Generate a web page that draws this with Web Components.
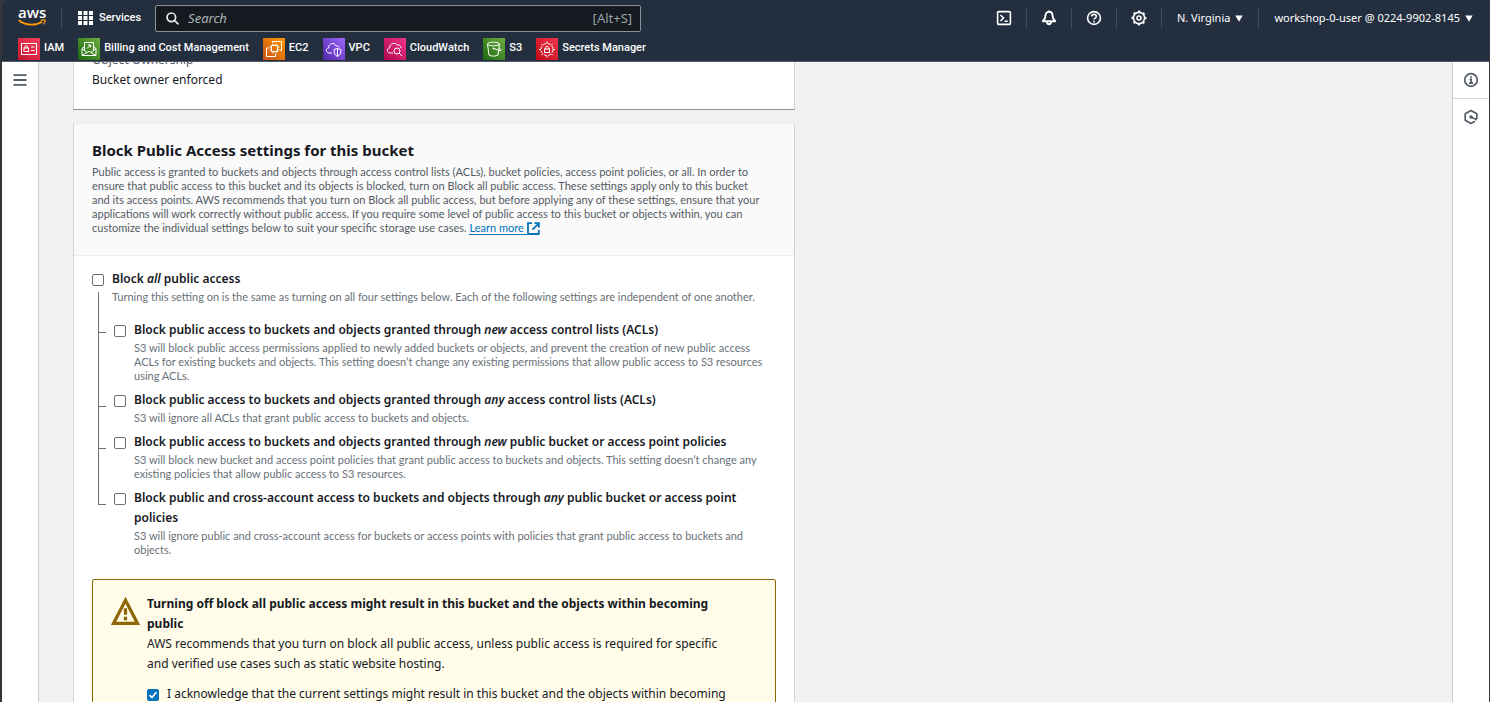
<!DOCTYPE html>
<html lang="en">
<head>
<meta charset="utf-8">
<meta name="viewport" content="width=device-width, initial-scale=1">
<title>S3 - Create bucket</title>
<style>
  body {
    margin: 0;
    font-family: "Noto Sans", "Open Sans", sans-serif;
    font-size: 12px;
    line-height: 20px;
    color: #16191f;
    background: #33373c;
    overflow: hidden;
    --font-nav: Roboto, "Liberation Sans", sans-serif;
    --font-small: Lato, "Liberation Sans", sans-serif;
  }
  em { font-style: italic; }
</style>
</head>
<body>
<console-app></console-app>

<template id="console-app">
  <style>
    :host { display: flex; flex-direction: column; height: 100vh; padding: 0 1px 0 2px; box-sizing: border-box; }
    .frame { flex: 1; min-height: 0; display: flex; background: #f2f2f2; }
    nav, aside { flex: none; background: #fff; }
    nav { width: 36px; border-right: 1px solid #c8cccc; }
    aside { width: 36px; border-left: 1px solid #c8cccc; }
    button { all: unset; display: grid; place-items: center; width: 100%; height: 36px; color: #545b64; }
    aside button { border-bottom: 1px solid #d5dbdb; }
    aside button:last-child { border-bottom: 0; }
    main { flex: 1; min-width: 0; overflow: hidden; padding-left: 34px; }
    .scrolled { display: grid; gap: 13px; max-width: 722px; margin-top: -32px; }
    h2, p, ul { margin: 0; padding: 0; }
    .k { color: #545b64; }
    h2 { font-size: 15px; line-height: 20px; font-weight: 700; }
    .desc { font-family: var(--font-small); font-size: 11px; line-height: 14px; color: #545b64; margin-top: 5px; }
    a { color: #0073bb; text-decoration: none; border-bottom: 1px solid #0073bb; }
    .desc svg { vertical-align: -3px; color: #0073bb; }
    setting-list { margin-bottom: 22px; }
  </style>
  <top-nav></top-nav>
  <div class="frame">
    <nav aria-label="Service">
      <button type="button" aria-label="Open navigation"><svg width="14" height="12" viewBox="0 0 14 12" stroke="currentColor" stroke-width="1.8"><path d="M.5 1.2h13M.5 6h13M.5 10.800h13"/></svg></button>
    </nav>
    <main>
      <div class="scrolled">
        <section-card>
          <div class="k">Object Ownership</div>
          <div>Bucket owner enforced</div>
        </section-card>
        <section-card>
          <h2 slot="header">Block Public Access settings for this bucket</h2>
          <p slot="header" class="desc">Public access is granted to buckets and objects through access control lists (ACLs), bucket policies, access point policies, or all. In order to<br>ensure that public access to this bucket and its objects is blocked, turn on Block all public access. These settings apply only to this bucket<br>and its access points. AWS recommends that you turn on Block all public access, but before applying any of these settings, ensure that your<br>applications will work correctly without public access. If you require some level of public access to this bucket or objects within, you can<br>customize the individual settings below to suit your specific storage use cases. <a href="#learn">Learn more </a> <svg width="13" height="13" viewBox="0 0 13 13" fill="none" stroke="currentColor" stroke-width="1.8"><path d="M5 1.200H1v10.800h10.800V8M7.500 1.200h4.400v4.400M11.800 1.300L5.500 7.600"/></svg></p>
          <setting-list>
            <setting-option kind="root">Block <em>all</em> public access
              <span slot="desc">Turning this setting on is the same as turning on all four settings below. Each of the following settings are independent of one another.</span></setting-option>
            <setting-option kind="first">Block public access to buckets and objects granted through <em>new</em> access control lists (ACLs)
              <span slot="desc">S3 will block public access permissions applied to newly added buckets or objects, and prevent the creation of new public access<br>ACLs for existing buckets and objects. This setting doesn’t change any existing permissions that allow public access to S3 resources<br>using ACLs.</span></setting-option>
            <setting-option>Block public access to buckets and objects granted through <em>any</em> access control lists (ACLs)
              <span slot="desc">S3 will ignore all ACLs that grant public access to buckets and objects.</span></setting-option>
            <setting-option>Block public access to buckets and objects granted through <em>new</em> public bucket or access point policies
              <span slot="desc">S3 will block new bucket and access point policies that grant public access to buckets and objects. This setting doesn’t change any<br>existing policies that allow public access to S3 resources.</span></setting-option>
            <setting-option kind="last">Block public and cross-account access to buckets and objects through <em>any</em> public bucket or access point<br>policies
              <span slot="desc">S3 will ignore public and cross-account access for buckets or access points with policies that grant public access to buckets and<br>objects.</span></setting-option>
          </setting-list>
          <warning-alert>
            <span slot="title">Turning off block all public access might result in this bucket and the objects within becoming<br>public</span>
            AWS recommends that you turn on block all public access, unless public access is required for specific<br>and verified use cases such as static website hosting.
            <span slot="ack">I acknowledge that the current settings might result in this bucket and the objects within becoming</span>
          </warning-alert>
        </section-card>
      </div>
    </main>
    <aside aria-label="Tools">
      <button type="button" aria-label="Info"><svg width="16" height="16" viewBox="0 0 16 16" fill="none" stroke="currentColor" stroke-width="1.700"><circle cx="8" cy="8" r="6.300"/><path d="M6.500 7.300H8.200V11M6 11.200h4.300M7.300 4.800h1.600"/></svg></button>
      <button type="button" aria-label="Tutorials"><svg width="16" height="16" viewBox="0 0 16 16" fill="none" stroke="currentColor" stroke-width="1.700" stroke-linejoin="round"><path d="M13.800 10V4.800L8 1.600 2.200 4.800v6.400L8 14.400l4-2.200"/><circle cx="8" cy="8" r="1.800" fill="currentColor" stroke="none"/><path d="M8 8l5.800 2.800"/></svg></button>
    </aside>
  </div>
</template>

<template id="top-nav">
  <style>
    :host { display: block; flex: none; background: #232f3e; color: #fff; height: 61px; border-bottom: 1px solid #545b64; border-top-left-radius: 8px; }
    .row { display: flex; align-items: center; }
    .bar { height: 36px; }
    button, input, a { all: unset; box-sizing: border-box; }
    .logo { flex: none; display: grid; width: 28px; height: 22px; margin-left: 16px; align-content: start; justify-items: center; }
    .logo span { font: 600 15px/11px "Open Sans", sans-serif; height: 12px; }
    .sep { flex: none; width: 1px; height: 20px; background: #414d5c; }
    .logo + .sep { margin-left: 15px; }
    .services { display: flex; align-items: center; gap: 6px; font: 500 11px/20px var(--font-nav); margin: 0 14px 0 16px; }
    .search { display: flex; align-items: center; box-sizing: border-box; flex: 0 1 486px; height: 27px; padding: 0 8px 0 10px; border: 1px solid #879596; border-radius: 2px; background: #16191f; }
    .search input { flex: 1; min-width: 0; margin-left: 9px; font-size: 13px; line-height: 20px; color: #fff; }
    .search input::placeholder { color: #aab7b8; font-style: italic; opacity: 1; }
    .search span { font-size: 13px; color: #95a5a6; }
    .tools { margin-left: auto; display: flex; align-items: center; padding-right: 1px; }
    .ic { display: grid; place-items: center; width: 44px; height: 30px; }
    .menu { display: flex; align-items: center; gap: 5px; font-size: 11px; line-height: 20px; padding: 0 15px; }
    .favs { gap: 14px; padding-left: 16px; height: 25px; align-items: start; }
    favorite-link { margin-top: 2px; }
  </style>
  <div class="row bar">
    <a class="logo" href="#home" aria-label="AWS home"><span>aws</span><svg width="28" height="8" viewBox="0 0 28 8" fill="none" stroke="#f90"><path d="M.8 1.200C7.500 6.800 18 7 24 2.800" stroke-width="1.800"/><path d="M22.800 1.300c2-.700 4.400-.6 4.400 0s-.4 2.500-1.600 4" stroke-width="1.300"/></svg></a>
    <span class="sep"></span>
    <button type="button" class="services"><svg width="15" height="14" viewBox="0 0 15 14" fill="#fff"><path d="M0 0h4v4H0zM5.500 0h4v4h-4zM11 0h4v4h-4zM0 5h4v4H0zM5.500 5h4v4h-4zM11 5h4v4h-4zM0 10h4v4H0zM5.500 10h4v4h-4zM11 10h4v4h-4z"/></svg>Services</button>
    <div class="search"><svg width="13" height="13" viewBox="0 0 13 13" fill="none" stroke="#eaeded" stroke-width="1.700"><circle cx="5.300" cy="5.300" r="4.300"/><path d="M8.400 8.400l4 4"/></svg><input type="search" aria-label="Search" placeholder="Search"><span>[Alt+S]</span></div>
    <div class="tools">
      <button type="button" class="ic" aria-label="CloudShell"><svg width="16" height="16" viewBox="0 0 16 16" fill="none" stroke="#fff" stroke-width="1.600"><rect x="1.600" y="1.600" width="12.800" height="12.800" rx="1"/><path d="M4.500 5l3 3-3 3M8.500 11.300h3.300"/></svg></button><span class="sep"></span>
      <button type="button" class="ic" aria-label="Notifications"><svg width="16" height="16" viewBox="0 0 16 16" fill="none" stroke="#fff" stroke-width="1.900" stroke-linejoin="round"><path d="M8 1.800C5.500 1.800 4.500 3.700 4.500 5.500c0 3-1 4-2.700 5.700h12.400C12.500 9.500 11.500 8.500 11.500 5.500 11.500 3.700 10.500 1.800 8 1.800zM8 .5v1.300"/><path d="M6 11.500c0 3.600 4 3.600 4 0"/></svg></button><span class="sep"></span>
      <button type="button" class="ic" aria-label="Help"><svg width="16" height="16" viewBox="0 0 16 16" fill="none" stroke="#fff" stroke-width="1.600"><circle cx="8" cy="8" r="6.400"/><path d="M5.700 6.600c0-3 4.600-2.800 4.600-.2 0 1.700-2.300 1.600-2.300 3.200M8 10.700v1.700"/></svg></button><span class="sep"></span>
      <button type="button" class="ic" aria-label="Settings"><svg width="16" height="16" viewBox="0 0 16 16" fill="none" stroke="#fff"><circle cx="8" cy="8" r="5.600" stroke-width="1.600"/><circle cx="8" cy="8" r="6.700" stroke-width="1.500" stroke-dasharray="2.400 2.862" stroke-dashoffset="1.200"/><circle cx="8" cy="8" r="2" stroke-width="1.600"/></svg></button><span class="sep"></span>
      <button type="button" class="menu">N. Virginia <svg width="8" height="7" viewBox="0 0 8 7" fill="#fff"><path d="M.3.500h7.400L4 6.700z"/></svg></button><span class="sep"></span>
      <button type="button" class="menu">workshop-0-user @ 0224-9902-8145 <svg width="8" height="7" viewBox="0 0 8 7" fill="#fff"><path d="M.3.500h7.400L4 6.700z"/></svg></button>
    </div>
  </div>
  <div class="row favs">
    <favorite-link tone="red" icon="iam">IAM</favorite-link>
    <favorite-link tone="green" icon="billing">Billing and Cost Management</favorite-link>
    <favorite-link tone="orange" icon="ec2">EC2</favorite-link>
    <favorite-link tone="purple" icon="vpc">VPC</favorite-link>
    <favorite-link tone="pink" icon="cloudwatch">CloudWatch</favorite-link>
    <favorite-link tone="green" icon="s3">S3</favorite-link>
    <favorite-link tone="red" icon="secrets">Secrets Manager</favorite-link>
  </div>
</template>

<template id="favorite-link">
  <style>
    :host { display: block; }
    a { display: flex; gap: 4px; color: #fff; text-decoration: none; font: 500 11px/20px var(--font-nav); }
    i { flex: none; width: 22px; height: 22px; background: linear-gradient(45deg, var(--a), var(--b)); }
    svg { display: block; }
    :host([tone=red]) { --a: #bd0816; --b: #f4364c; }
    :host([icon=iam]) { --a: #c5162e; --b: #f43e5c; }
    :host([tone=green]) { --a: #1b660f; --b: #6cae3e; }
    :host([tone=orange]) { --a: #c8511b; --b: #f90; }
    :host([tone=purple]) { --a: #4d27a8; --b: #a166ff; }
    :host([tone=pink]) { --a: #b0084d; --b: #f0338a; }
  </style>
  <a href="#service"><i></i><slot></slot></a>
</template>

<template id="section-card">
  <style>
    :host { display: block; background: #fff; border: 1px solid #d0d4d4; border-top-color: #eaeded; border-bottom-color: #879596; box-sizing: border-box; }
    .head { background: #fafafa; border-bottom: 1px solid #eaeded; padding: 16px 18px 20px; }
    .head[hidden] { display: none; }
    .body { padding: 13px 18px 19px; }
    .head[hidden] + .body { padding-top: 19px; }
  </style>
  <div class="head"><slot name="header"></slot></div>
  <div class="body"><slot></slot></div>
</template>

<template id="setting-list">
  <style>:host { display: grid; }</style>
  <slot></slot>
</template>

<template id="check-box-style">
  <style>
    input { appearance: none; flex: none; box-sizing: border-box; width: 12px; height: 12px; margin: 0; border: 1px solid #687078; border-radius: 2px; background: #fff; }
    input:checked { border-color: #0073bb; background: #0073bb url("data:image/svg+xml,%3Csvg xmlns='http://www.w3.org/2000/svg' viewBox='0 0 10 10'%3E%3Cpath d='M1.500 5.200 4 7.600 8.500 2' fill='none' stroke='white' stroke-width='1.700'/%3E%3C/svg%3E"); }
  </style>
</template>

<template id="setting-option">
  <style>
    :host { display: flex; --line: #687078; }
    .rail { flex: none; display: flex; flex-direction: column; width: 8px; margin: 0 8px 0 6px; }
    .tick { height: 16px; border: solid var(--line); border-width: 0 0 1px 1px; }
    :host([kind=first]) .tick { height: 12px; }
    .down { flex: 1; border-left: 1px solid var(--line); }
    :host([kind=last]) .down { border: 0; }
    .box { flex: none; display: flex; flex-direction: column; width: 20px; padding-top: 5px; }
    .box .down { display: none; margin: 6px 0 0 6px; }
    .text { padding-bottom: 7px; }
    label { display: block; font-weight: 600; }
    .desc { font: 11px/14px var(--font-small); color: #687078; margin-top: 1px; }
    :host([kind=root]) .rail { display: none; }
    :host([kind=root]) .box .down { display: block; }
    :host([kind=root]) .text { padding-bottom: 16px; }
    :host([kind=last]) .text { padding-bottom: 0; }
  </style>
  <div class="rail"><div class="tick"></div><div class="down"></div></div>
  <div class="box"><input type="checkbox" id="opt"><div class="down"></div></div>
  <div class="text"><label for="opt"><slot></slot></label><div class="desc"><slot name="desc"></slot></div></div>
</template>

<template id="warning-alert">
  <style>
    :host { display: flex; gap: 7px; background: #fffce9; border: 1px solid #8d6605; border-radius: 2px; padding: 14px 18px; }
    .icon { flex: none; margin-top: 3px; }
    strong { display: block; }
    .ack { display: flex; gap: 8px; margin-top: 10px; }
    .ack input { margin-top: 5px; }
  </style>
  <svg class="icon" width="29" height="28" viewBox="0 0 29 28" fill="none" stroke="#8d6605"><path d="M14.500 3.200L2.600 26.300h23.800z" stroke-width="3.200"/><path d="M14.500 11.200v6.600M14.500 19.800v3.400" stroke-width="3.200"/></svg>
  <div><strong><slot name="title"></slot></strong><slot></slot>
  <div class="ack"><input type="checkbox" id="ack" checked><label for="ack"><slot name="ack"></slot></label></div></div>
</template>

<script>
  const part = id => document.getElementById(id).content.cloneNode(true);

  const glyphs = {
    iam: '<rect x="3.500" y="5.500" width="15" height="11"/><rect x="6" y="10" width="4.500" height="3.500"/><path d="M7 10V8.800c0-1.500 2.500-1.500 2.500 0V10M13 9h3.500M13 12.500h3.500"/>',
    billing: '<path d="M4 10.500v7h14v-7l-2.500-2M4 10.500l2.500-2M4 10.500l5 4 2-1.200 2 1.200 5-4M4 17.500l5-3M18 17.500l-5-3M6.500 12V4.500h9V12M9 10.500l3.500-3.500M10 7h2.500v2.500"/>',
    ec2: '<rect x="8.500" y="7.500" width="6" height="6"/><path d="M10 7.500V5.500M13 7.500V5.500M10 15.500v-2M13 15.500v-2M6.500 9h2M6.500 12h2M14.500 9h2M14.500 12h2M9.500 5V3.500h9v9H17M6 10H3.500v8.500h9V16"/>',
    vpc: '<path d="M9 15H6c-3.500 0-3.500-5-.300-5C5.500 5 11.500 4 13 8c2-.5 3 .5 3 1.500"/><path d="M11 11.500l3.500-1 3.500 1c0 3.500-.5 5.500-3.500 7-3-1.500-3.500-3.500-3.500-7zM14.500 10.500v8"/>',
    cloudwatch: '<path d="M9 15H6c-3.500 0-3.500-5-.300-5C5.500 5 11.500 4 13 7c2-.5 4 .5 4 3"/><circle cx="13" cy="13" r="3"/><path d="M15.200 15.200l3 3"/>',
    s3: '<ellipse cx="10.500" cy="6" rx="6" ry="1.800"/><path d="M4.500 6l1.500 11c2 1.500 7 1.500 9 0l1.500-11M10.500 10.500l6.500 2c2 .3 1.500-1-.800-2"/><circle cx="10.500" cy="10.500" r=".6"/>',
    secrets: '<circle cx="11" cy="11.500" r="6" stroke-dasharray="3.200 1.500"/><path d="M11 3.500v2M11 17.500v2M3 11.500h2M17 11.500h2M5.300 5.800l1.400 1.400M15.300 15.800l1.400 1.400M5.300 17.200l1.400-1.400M15.300 7.200l1.400-1.400M9.500 11V9.500c0-1.500 3-1.500 3 0V11"/><rect x="8.500" y="11" width="5" height="3.500"/>'
  };

  function define(name, setup) {
    customElements.define(name, class extends HTMLElement {
      constructor() {
        super();
        this.attachShadow({ mode: 'open' }).append(part(name));
      }
      connectedCallback() { if (setup) setup(this, this.shadowRoot); }
    });
  }

  define('favorite-link', (host, root) => {
    root.querySelector('i').innerHTML =
      `<svg width="22" height="22" viewBox="0 0 22 22" fill="none" stroke="#fff" stroke-width="1">${glyphs[host.getAttribute('icon')]}</svg>`;
  });
  define('section-card', (host, root) => {
    root.querySelector('.head').hidden = !host.querySelector('[slot=header]');
  });
  define('setting-list');
  define('setting-option', (host, root) => root.prepend(part('check-box-style')));
  define('warning-alert', (host, root) => root.prepend(part('check-box-style')));
  define('top-nav');
  define('console-app');
</script>
</body>
</html>
